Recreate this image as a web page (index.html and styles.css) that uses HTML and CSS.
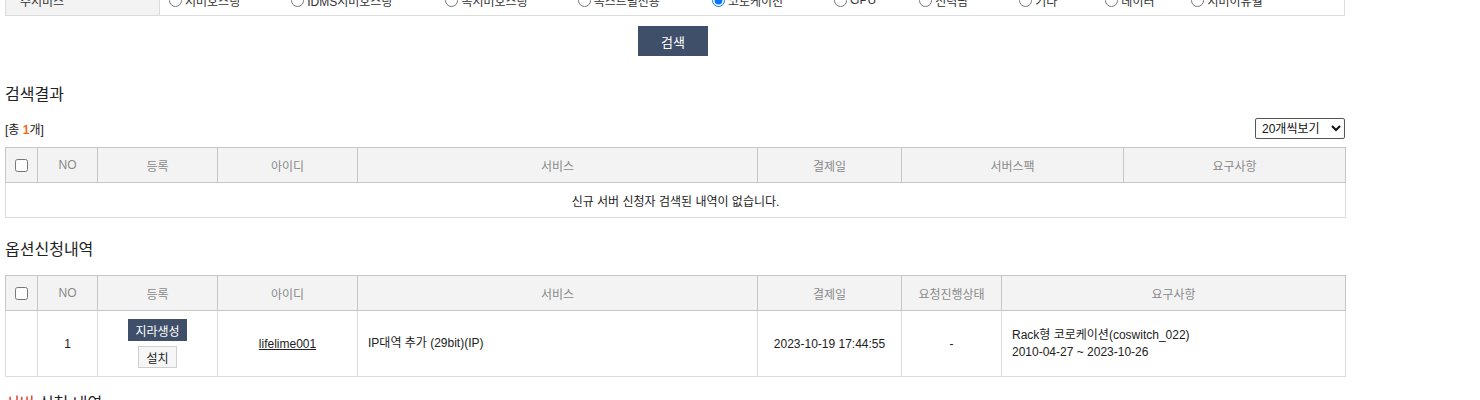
FILE: index.html
```html
<!DOCTYPE html>
<html lang="ko">
<head>
<meta charset="utf-8">
<title>검색결과</title>
<link rel="stylesheet" href="styles.css">
</head>
<body>
<div class="page">
  <div class="form-row">
    <div class="form-label">주서비스</div>
    <div class="form-field">
      <label class="radio r1"><input type="radio" name="svc">서버호스팅</label>
      <label class="radio r2"><input type="radio" name="svc">IDMS서버호스팅</label>
      <label class="radio r3"><input type="radio" name="svc">독서버호스팅</label>
      <label class="radio r4"><input type="radio" name="svc">독스트럴전용</label>
      <label class="radio r5"><input type="radio" name="svc" checked>코로케이션</label>
      <label class="radio r6"><input type="radio" name="svc">GPU</label>
      <label class="radio r7"><input type="radio" name="svc">전력팜</label>
      <label class="radio r8"><input type="radio" name="svc">기타</label>
      <label class="radio r9"><input type="radio" name="svc">데이터</label>
      <label class="radio"><input type="radio" name="svc">서버이유월</label>
    </div>
  </div>

  <div class="btn-wrap"><button class="btn-search" type="button">검색</button></div>

  <h2 class="title t1">검색결과</h2>
  <div class="toolbar">
    <span class="count">[총 <b class="num">1</b>개]</span>
    <select class="per-page"><option>20개씩보기</option></select>
  </div>

  <table class="grid">
    <colgroup>
      <col style="width:32px"><col style="width:60px"><col style="width:120px"><col style="width:140px">
      <col style="width:400px"><col style="width:144px"><col style="width:222px"><col style="width:222px">
    </colgroup>
    <thead>
      <tr>
        <th><input type="checkbox"></th><th>NO</th><th>등록</th><th>아이디</th><th>서비스</th><th>결제일</th><th>서버스팩</th><th>요구사항</th>
      </tr>
    </thead>
    <tbody>
      <tr class="empty"><td colspan="8">신규 서버 신청자 검색된 내역이 없습니다.</td></tr>
    </tbody>
  </table>

  <h2 class="title t2">옵션신청내역</h2>
  <table class="grid">
    <colgroup>
      <col style="width:32px"><col style="width:60px"><col style="width:120px"><col style="width:140px">
      <col style="width:400px"><col style="width:144px"><col style="width:100px"><col style="width:344px">
    </colgroup>
    <thead>
      <tr>
        <th><input type="checkbox"></th><th>NO</th><th>등록</th><th>아이디</th><th>서비스</th><th>결제일</th><th>요청진행상태</th><th>요구사항</th>
      </tr>
    </thead>
    <tbody>
      <tr class="data">
        <td></td>
        <td>1</td>
        <td>
          <div class="reg">
            <button class="btn-dark" type="button">지라생성</button>
            <button class="btn-light" type="button">설치</button>
          </div>
        </td>
        <td><a class="uid" href="#">lifelime001</a></td>
        <td class="left">IP대역 추가 (29bit)(IP)</td>
        <td>2023-10-19 17:44:55</td>
        <td>-</td>
        <td class="left">Rack형 코로케이션(coswitch_022)<br>2010-04-27 ~ 2023-10-26</td>
      </tr>
    </tbody>
  </table>

  <h2 class="title t3"><span class="red">서버</span> 신청 내역</h2>
</div>
</body>
</html>
```

FILE: styles.css
```css
html, body {
  margin: 0;
  padding: 0;
  background: #fff;
}
body {
  font-family: "Liberation Sans", "Noto Sans CJK KR", sans-serif;
  font-size: 12px;
  color: #222;
  overflow: hidden;
}
.page {
  width: 1340px;
  padding-left: 5px;
}

/* top form row (scrolled, only the bottom visible) */
.form-row {
  display: flex;
  height: 31px;
  margin-top: -15px;
  border: 1px solid #dcdcdc;
  border-top: none;
  box-sizing: border-box;
}
.form-label {
  width: 154px;
  flex: none;
  background: #f3f3f3;
  border-right: 1px solid #dcdcdc;
  box-sizing: border-box;
  padding-left: 14px;
  display: flex;
  align-items: center;
  color: #333;
}
.form-field {
  display: flex;
  align-items: center;
  padding-left: 9px;
}
.radio {
  display: inline-flex;
  align-items: center;
  margin-right: 45px;
  color: #333;
  white-space: nowrap;
}
.radio input {
  margin: 0 3px 0 0;
  width: 13px;
  height: 13px;
}
.r1 { margin-right: 51px; }
.r2 { margin-right: 53px; }
.r3 { margin-right: 50px; }
.r4 { margin-right: 52px; }
.r5 { margin-right: 51px; }
.r6 { margin-right: 43px; }
.r7 { margin-right: 51px; }
.r8 { margin-right: 48px; }
.r9 { margin-right: 37px; }

.btn-wrap {
  display: flex;
  justify-content: center;
  margin-top: 10px;
  padding-right: 4px;
}
.btn-search {
  width: 70px;
  height: 30px;
  border: none;
  background: #404f69;
  color: #fff;
  font-family: "Liberation Sans", "Noto Sans CJK KR", sans-serif;
  font-size: 13px;
  padding: 0;
}

.title {
  margin: 0;
  font-size: 16px;
  font-weight: normal;
  line-height: 20px;
  color: #222;
}
.t1 { margin-top: 29px; }
.t2 { margin-top: 22px; margin-bottom: 15px; }
.t3 { margin-top: 17px; }
.red { color: #d9301e; }

.toolbar {
  display: flex;
  justify-content: space-between;
  align-items: center;
  margin-top: 13px;
  margin-bottom: 8px;
  height: 21px;
}
.count { font-size: 12px; color: #222; }
.num { color: #f26b11; font-weight: bold; }
.per-page {
  width: 90px;
  height: 21px;
  font-family: "Liberation Sans", "Noto Sans CJK KR", sans-serif;
  font-size: 12px;
  color: #111;
  border: 1px solid #555;
  border-radius: 2px;
  padding: 0 0 0 2px;
  background: #fff;
}

.grid {
  width: 1340px;
  border-collapse: collapse;
  table-layout: fixed;
}
.grid th {
  height: 34px;
  background: #f3f3f3;
  border: 1px solid #c6c6c6;
  color: #8a8a8a;
  font-weight: normal;
  font-size: 12px;
  padding: 0;
  text-align: center;
}
.grid th input {
  margin: 0;
  width: 13px;
  height: 13px;
  vertical-align: middle;
}
.grid td {
  border: 1px solid #dcdcdc;
  text-align: center;
  padding: 0;
  font-size: 12px;
  color: #222;
}
.grid td.left {
  text-align: left;
  padding-left: 10px;
  line-height: 17px;
}
.empty td {
  height: 34px;
}
.data td {
  height: 65px;
}
.reg {
  display: flex;
  flex-direction: column;
  align-items: center;
  gap: 5px;
}
.btn-dark {
  height: 22px;
  padding: 0 7px;
  background: #404f69;
  color: #fff;
  border: none;
  font-family: "Liberation Sans", "Noto Sans CJK KR", sans-serif;
  font-size: 12px;
}
.btn-light {
  height: 22px;
  padding: 0 7px;
  background: #f6f6f6;
  color: #222;
  border: 1px solid #cfcfcf;
  font-family: "Liberation Sans", "Noto Sans CJK KR", sans-serif;
  font-size: 12px;
}
.uid {
  color: #222;
  text-decoration: underline;
}
```
